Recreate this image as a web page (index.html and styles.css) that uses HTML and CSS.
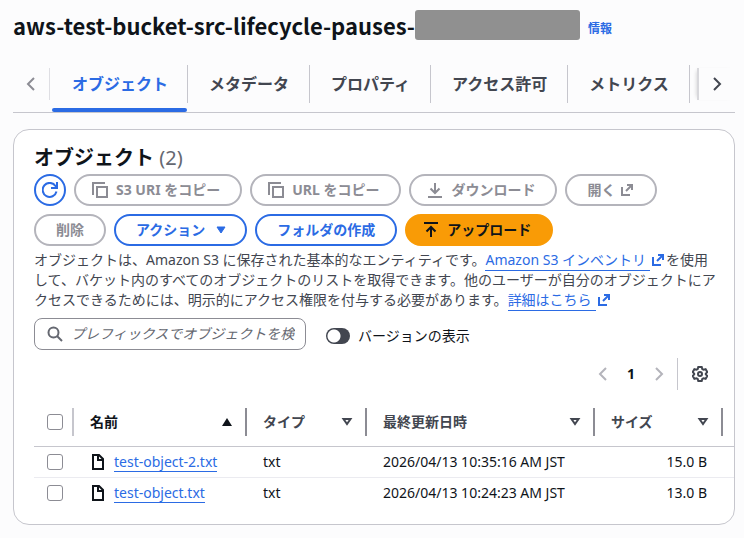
FILE: index.html
```
<!DOCTYPE html>
<html lang="ja">
<head>
    <meta charset="UTF-8">
    <meta name="viewport" content="width=device-width, initial-scale=1.0">
    <title>aws-test-bucket-src-lifecycle-pauses</title>
    <link rel="stylesheet" href="styles.css">
</head>
<body>
<svg class="sprite" aria-hidden="true">
    <symbol id="i-left" viewBox="0 0 16 16"><path d="M11 2 5 8l6 6"/></symbol>
    <symbol id="i-right" viewBox="0 0 16 16"><path d="m5 2 6 6-6 6"/></symbol>
    <symbol id="i-copy" viewBox="0 0 16 16"><path d="M5 5h10v10H5zM1 13V1h12"/></symbol>
    <symbol id="i-external" viewBox="0 0 16 16"><path d="M8 3h5v5M7 9l6-6M3 5v8h8"/></symbol>
    <symbol id="i-file" viewBox="0 0 16 16"><path d="M3 1h6l4 4v10H3zM8 1v5h5"/></symbol>
    <symbol id="i-sort" viewBox="0 0 16 16"><path d="M4.500 5h7L8 10z"/></symbol>
</svg>

<header class="page-title">
    <h1>aws-test-bucket-src-lifecycle-pauses-</h1>
    <span class="redacted"></span>
    <a class="info" href="#">情報</a>
</header>

<nav class="tabs">
    <button class="scroll prev" aria-label="前へ" disabled><svg class="icon"><use href="#i-left"/></svg></button>
    <div class="tab-list" role="tablist">
        <button class="tab active" role="tab" aria-selected="true">オブジェクト</button>
        <button class="tab" role="tab">メタデータ</button>
        <button class="tab" role="tab">プロパティ</button>
        <button class="tab" role="tab">アクセス許可</button>
        <button class="tab" role="tab">メトリクス</button>
    </div>
    <button class="scroll next" aria-label="次へ"><svg class="icon"><use href="#i-right"/></svg></button>
</nav>

<main class="card">
    <h2>オブジェクト <span class="count">(2)</span></h2>
    <div class="actions">
        <button class="btn round" aria-label="更新"><svg class="icon" viewBox="0 0 16 16"><path d="M14.500 9.500A7 7 0 1 1 13.500 4L15 6M15 0v6H9"/></svg></button>
        <button class="btn lead" disabled><svg class="icon"><use href="#i-copy"/></svg>S3 URI をコピー</button>
        <button class="btn lead" disabled><svg class="icon"><use href="#i-copy"/></svg>URL をコピー</button>
        <button class="btn lead" disabled><svg class="icon" viewBox="0 0 16 16"><path d="M8 1v10M3.500 6.500 8 11l4.500-4.500M1 15h14"/></svg>ダウンロード</button>
        <button class="btn trail" disabled>開く<svg class="icon"><use href="#i-external"/></svg></button>
        <button class="btn" disabled>削除</button>
        <button class="btn menu">アクション<svg class="icon"><path d="M4 5h8l-4 6z"/></svg></button>
        <button class="btn">フォルダの作成</button>
        <button class="btn lead primary"><svg class="icon" viewBox="0 0 16 16"><path d="M8 15V5M3.500 9.500 8 5l4.500 4.500M1 1h14"/></svg>アップロード</button>
    </div>
    <p class="description">オブジェクトは、Amazon S3 に保存された基本的なエンティティです。<a href="#">Amazon S3 インベントリ</a><svg class="icon link-icon"><use href="#i-external"/></svg>を使用して、バケット内のすべてのオブジェクトのリストを取得できます。他のユーザーが自分のオブジェクトにアクセスできるためには、明示的にアクセス権限を付与する必要があります。<a href="#">詳細はこちら</a><svg class="icon link-icon"><use href="#i-external"/></svg></p>

    <div class="filters">
        <label class="search">
            <svg class="icon" viewBox="0 0 16 16"><circle cx="6.500" cy="6.500" r="5"/><path d="m10 10 5 5"/></svg>
            <input type="text" aria-label="オブジェクトを検索" placeholder="プレフィックスでオブジェクトを検">
        </label>
        <label class="toggle"><input type="checkbox" role="switch">バージョンの表示</label>
    </div>

    <div class="pagination">
        <button class="page-btn" aria-label="前のページ" disabled><svg class="icon"><use href="#i-left"/></svg></button>
        <button class="page-btn current">1</button>
        <button class="page-btn" aria-label="次のページ" disabled><svg class="icon"><use href="#i-right"/></svg></button>
        <button class="settings" aria-label="設定"><svg class="icon" viewBox="0 0 16 16"><path d="M6.300 1h3.400l.6 2 1.200.7 2.100-.5 1.700 2.900L13.800 7.600v.8l1.500 1.500-1.700 2.900-2.100-.5-1.200.7-.6 2H6.300l-.6-2-1.200-.7-2.100.5L.7 9.900l1.500-1.500v-.8L.7 6.100l1.700-2.900 2.100.5L5.700 3z"/><circle cx="8" cy="8" r="2"/></svg></button>
    </div>

    <div class="table-wrap">
        <table>
            <colgroup>
                <col class="c-check"><col class="c-name"><col class="c-type"><col class="c-date"><col class="c-size"><col>
            </colgroup>
            <thead>
                <tr>
                    <th class="check"><input type="checkbox" aria-label="すべて選択"></th>
                    <th class="sorted"><div class="head">名前<svg class="icon"><path d="M3 12h10L8 4z"/></svg></div></th>
                    <th><div class="head">タイプ<svg class="icon"><use href="#i-sort"/></svg></div></th>
                    <th><div class="head">最終更新日時<svg class="icon"><use href="#i-sort"/></svg></div></th>
                    <th><div class="head">サイズ<svg class="icon"><use href="#i-sort"/></svg></div></th>
                    <td></td>
                </tr>
            </thead>
            <tbody>
                <tr>
                    <td class="check"><input type="checkbox" aria-label="test-object-2.txt"></td>
                    <td><div class="file"><svg class="icon"><use href="#i-file"/></svg><a href="#">test-object-2.txt</a></div></td>
                    <td>txt</td>
                    <td>2026/04/13 10:35:16 AM JST</td>
                    <td class="size">15.0 B</td>
                    <td></td>
                </tr>
                <tr>
                    <td class="check"><input type="checkbox" aria-label="test-object.txt"></td>
                    <td><div class="file"><svg class="icon"><use href="#i-file"/></svg><a href="#">test-object.txt</a></div></td>
                    <td>txt</td>
                    <td>2026/04/13 10:24:23 AM JST</td>
                    <td class="size">13.0 B</td>
                    <td></td>
                </tr>
            </tbody>
        </table>
    </div>
</main>
</body>
</html>
```
FILE: styles.css
```
* { box-sizing: border-box; }
body { margin: 0; padding: 8px 9px 14px 13px; background: #fcfcfd; color: #0f141a; font: 14px/20px "Noto Sans", "Noto Sans CJK JP", sans-serif; }
button, input { font: inherit; color: inherit; }
button { padding: 0; border: 0; background: none; cursor: pointer; }
h1, h2, p { margin: 0; }
a { color: #2b6be4; }
.sprite { display: none; }
.icon { width: 16px; height: 16px; flex: none; fill: none; stroke: currentColor; stroke-width: 2; }

.page-title { display: flex; align-items: center; height: 34px; }
h1 { font: bold 22px/30px "Noto Sans CJK JP", sans-serif; }
.redacted { width: 165px; height: 30px; border-radius: 3px; background: #909090; }
.info { margin: 8px 0 0 8px; font-size: 12px; font-weight: bold; text-decoration: none; }

.tabs { display: flex; align-items: center; height: 71px; padding-top: 14px; border-bottom: 1px solid #c6c6cd; color: #424650; }
.scroll { display: grid; place-items: center; height: 32px; flex: none; }
.prev { width: 37px; margin-right: 2px; border-right: 1px solid #dedee3; color: #8c8c94; }
.next { width: 38px; padding-right: 1px; border-left: 2px solid #d8d8dc; box-shadow: -3px 0 4px -3px #ccc; }
.tab-list { display: flex; flex: 1; align-self: stretch; overflow: hidden; }
.tab { position: relative; flex: none; padding: 0 21px 1px; font-size: 16px; font-weight: bold; }
.tab::before { content: ""; position: absolute; right: 0; top: 9px; width: 1px; height: 38px; background: #c6c6cd; }
.tab.active { padding: 0 20px 1px; color: #2b6be4; }
.tab.active::after { content: ""; position: absolute; left: 0; right: 1px; bottom: 0; height: 4px; border-radius: 2px; background: #2b6be4; }

.card { margin-top: 16px; padding: 16px 0 16px 20px; border: 1px solid #c6c6cd; border-radius: 16px; background: #fff; }
h2 { font-size: 20px; line-height: 24px; }
.count { color: #656871; font-weight: normal; }
.actions { display: flex; flex-wrap: wrap; gap: 8px; margin: 4px 20px 4px 0; }
.btn { display: flex; align-items: center; height: 32px; padding: 0 20px; border: 2px solid #2b6be4; border-radius: 16px; color: #2b6be4; font-weight: bold; }
.btn:disabled { border-color: #b4b4bb; color: #8c8c94; }
.round { width: 32px; padding: 0 6px; }
.lead { gap: 8px; padding-left: 16px; }
.trail { gap: 4px; }
.menu { gap: 8px; padding-right: 16px; }
.menu .icon { fill: currentColor; stroke-width: 1; }
.primary { border-color: #f99b06; background: #f99b06; color: #0f141a; }
.description { margin-right: 17px; color: #424650; }
.description a { padding: 0 4px 1px 0; border-bottom: 1px solid; text-decoration: none; }
.link-icon { color: #2b6be4; vertical-align: -3px; }

.filters { display: flex; align-items: center; gap: 20px; margin-top: 8px; }
.search { display: flex; align-items: center; gap: 8px; width: 272px; height: 32px; padding: 0 10px 0 12px; border: 1px solid #8c8c94; border-radius: 8px; color: #656871; }
.search input { flex: 1; min-width: 0; padding: 0; border: 0; outline: 0; background: none; }
.search input::placeholder { color: #656871; font-style: italic; opacity: 1; }
.toggle { display: flex; align-items: center; gap: 8px; padding-top: 4px; }
.toggle input { appearance: none; width: 24px; height: 16px; margin: 0; border-radius: 8px; background: radial-gradient(circle at 8px 8px, #fff 6px, #424650 7px); }

.pagination { display: flex; justify-content: flex-end; align-items: center; height: 32px; margin: 8px 26px 8px 0; }
.page-btn { display: grid; place-items: center; width: 28px; height: 32px; font-weight: bold; }
.page-btn:disabled { color: #b4b4bb; }
.settings { display: grid; place-items: center; width: 31px; height: 32px; margin-left: 4px; padding-left: 14px; border-left: 1px solid #c6c6cd; color: #424650; }

.table-wrap { overflow: hidden; }
table { width: 100%; border-collapse: collapse; table-layout: fixed; }
.c-check { width: 40px; }
.c-name { width: 173px; }
.c-type { width: 120px; }
.c-date { width: 228px; }
.c-size { width: 128px; }
th, td { padding: 0 16px; text-align: left; white-space: nowrap; }
thead tr { height: 48px; border-bottom: 1px solid #c6c6cd; color: #424650; }
th { background: linear-gradient(#8c8c94, #8c8c94) right center / 2px 28px no-repeat; }
th.check { background-image: linear-gradient(#c6c6cd, #c6c6cd); }
th.sorted { color: #0f141a; }
.head { display: flex; align-items: center; justify-content: space-between; margin-right: -4px; }
.sorted .icon { fill: currentColor; stroke: none; }
tbody tr { height: 31px; }
tbody tr + tr { border-top: 1px solid #ebebf0; }
.check { padding: 0 0 0 13px; }
.check input { display: block; appearance: none; width: 16px; height: 16px; margin: 0; border: 1px solid #8c8c94; border-radius: 3px; background: #fff; }
.file { display: flex; align-items: center; gap: 8px; }
.file a { border-bottom: 1px solid; text-decoration: none; line-height: 19px; }
.size { text-align: right; }
```
